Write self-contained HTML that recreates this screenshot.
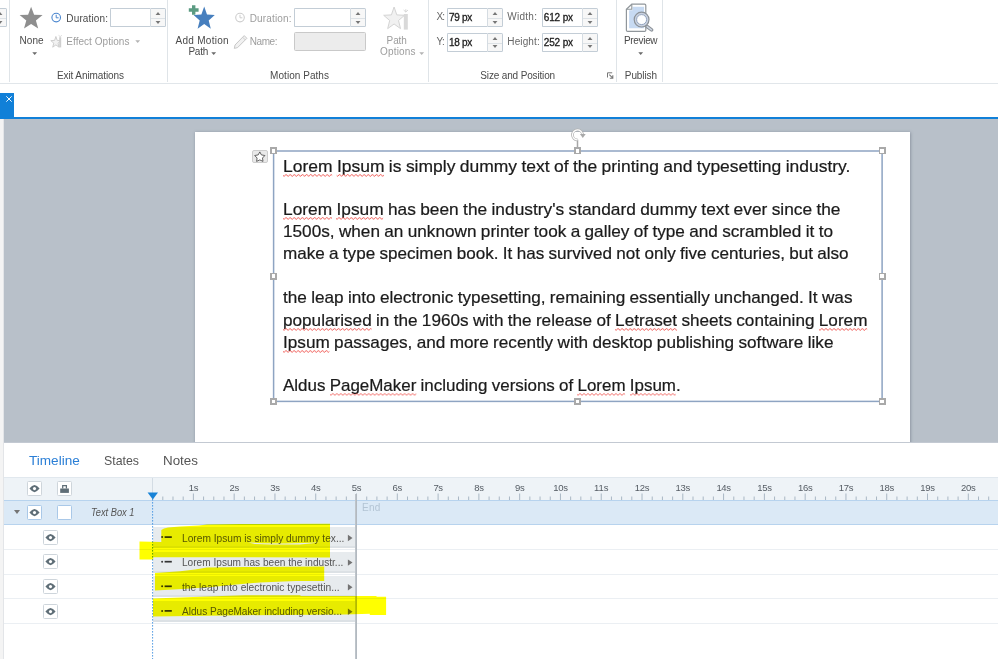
<!DOCTYPE html>
<html lang="en">
<head>
<meta charset="utf-8">
<title>Storyline - Timeline</title>
<style>
html,body{margin:0;padding:0;background:#fff;}
body{width:998px;height:659px;overflow:hidden;position:relative;font-family:"Liberation Sans",sans-serif;color:#444;}
.abs{position:absolute;}
.t{position:absolute;white-space:nowrap;line-height:1;}
/* ---------- ribbon ---------- */
#ribbon{position:absolute;left:0;top:0;width:998px;height:83px;background:#fff;border-bottom:1px solid #e1e6ea;}

.rt.dis{color:#9c9c9c;}
.vsep{position:absolute;width:1px;background:#dfe4e8;top:0;height:82px;}
.inp{position:absolute;box-sizing:border-box;border:1px solid #c3cdd6;border-right:none;background:#fff;height:20px;border-radius:1.5px 0 0 1.5px;}
.inp.gray{background:#ececec;border:1px solid #c9c9c9;border-radius:1.5px;}
.spin{position:absolute;box-sizing:border-box;border:1px solid #c3cdd6;border-left:1px solid #d5dce2;background:#f7f7f7;width:15px;height:20px;border-radius:0 1.5px 1.5px 0;}
.spin:before{content:"";position:absolute;left:0;right:0;top:8.4px;height:1px;background:#dde2e6;}
.spin i{position:absolute;left:4.2px;width:0;height:0;border-left:3px solid transparent;border-right:3px solid transparent;transform:scaleX(.82);}
.spin i.u{top:3px;border-bottom:3px solid #777;}
.spin i.d{top:11.2px;border-top:3px solid #777;}
.val{position:absolute;left:3px;top:3px;font-size:11px;line-height:13px;color:#222;white-space:nowrap;letter-spacing:.2px;}
.caret{position:absolute;width:0;height:0;border-left:2.9px solid transparent;border-right:2.9px solid transparent;border-top:2.9px solid #5c5c5c;}
.caret.dis{border-top-color:#aaa;}
/* ---------- doc tab strip ---------- */
#tabstrip{position:absolute;left:0;top:84px;width:998px;height:33px;background:#fff;}
#tabx{position:absolute;left:0;top:93px;width:14px;height:24px;background:#1180d8;}
#blueline{position:absolute;left:0;top:117px;width:998px;height:2px;background:#1180d8;}
/* ---------- workspace ---------- */
#work{position:absolute;left:0;top:119px;width:998px;height:323px;background:#b8c0c9;overflow:hidden;}
#leftstrip{position:absolute;left:0;top:119px;width:4.4px;height:540px;background:#f4f4f4;box-shadow:inset -1px 0 0 #e3e5e8;}
#slide{position:absolute;left:194.6px;top:13.4px;width:715.8px;height:320px;background:#fff;box-shadow:0 0 3px 0.5px rgba(110,120,135,.75);}
#workbottom{position:absolute;left:4px;top:442px;width:994px;height:1px;background:#c3c9d2;}
.hnd{position:absolute;width:7px;height:7px;background:#a9a9a9;}
.hnd:after{content:"";position:absolute;left:1.7px;top:1.7px;right:1.7px;bottom:1.7px;background:#fff;}
.sl{line-height:17px;}
.sq{position:relative;display:inline-block;}
.sqs{position:absolute;left:0;top:16px;overflow:hidden;}
/* ---------- timeline ---------- */
#tl{position:absolute;left:4px;top:443px;width:994px;height:216px;background:#fff;overflow:hidden;}
.ebox{position:absolute;width:15px;height:15px;box-sizing:border-box;border:1px solid #ced5db;border-radius:1.5px;background:#fff;}
.ebox.sel{border-color:#a9c8e8;}
.ebox svg{position:absolute;left:0;top:0;}
.bar{position:absolute;width:202px;height:21px;background:#e7ebee;border-bottom:2px solid #dce1e5;box-sizing:border-box;}
</style>
</head>
<body>

<!-- ================= RIBBON ================= -->
<div id="ribbon">
<div class="vsep" style="left:9px"></div>
<div class="vsep" style="left:167px"></div>
<div class="vsep" style="left:428px"></div>
<div class="vsep" style="left:616px"></div>
<div class="vsep" style="left:662px"></div>
<div class="spin" style="left:-8px;top:8.4px;height:18.6px;width:15px"><i class="u"></i><i class="d"></i></div>
<svg class="abs" style="left:0;top:0" width="998" height="83" viewBox="0 0 998 83"><polygon points="31.1,6.8 34.1,14.8 42.6,15.1 35.9,20.4 38.2,28.6 31.1,23.9 24.0,28.6 26.3,20.4 19.6,15.1 28.1,14.8" fill="#8e8e8e"/><circle cx="56.2" cy="17.6" r="4.3" fill="#fff" stroke="#4a86cf" stroke-width="1.1"/><path d="M56.2 14.8 V17.8 H58.6" stroke="#4a86cf" stroke-width="1" fill="none"/><polygon points="55.9,36.5 57.2,40.4 61.0,40.6 58.0,43.2 59.1,47.2 55.9,44.9 52.7,47.2 53.8,43.2 50.8,40.6 54.6,40.4" fill="#f2f2f2" stroke="#c9c9c9" stroke-width="0.9"/><path d="M60.2 37.2 V47.4" stroke="#cfcfcf" stroke-width="2"/><path d="M58.6 35.4 L60.2 36.6 L61.8 35.4" stroke="#cfcfcf" stroke-width=".8" fill="none"/><polygon points="204.2,6.5 207.0,14.6 214.8,15.0 208.7,20.4 210.8,28.8 204.2,24.0 197.6,28.8 199.7,20.4 193.6,15.0 201.4,14.6" fill="#477fbe"/><path d="M193.7 5.1 V15 M188.6 10 H198.8" stroke="#fff" stroke-width="5"/><path d="M193.7 5.3 V14.8 M188.8 10 H198.6" stroke="#5b9b82" stroke-width="3.4"/><circle cx="240" cy="17.6" r="4.3" fill="#fff" stroke="#cdcdcd" stroke-width="1.1"/><path d="M240 14.8 V17.8 H242.4" stroke="#cdcdcd" stroke-width="1" fill="none"/><path d="M244.2 35.6 L246.9 38.3 L237.6 47.6 L234.3 48.4 L235 45 Z" fill="#f1f1f1" stroke="#c8c8c8" stroke-width="1"/><path d="M242.6 37.2 L245.3 39.9" stroke="#c8c8c8" stroke-width=".9"/><polygon points="394.1,7.0 396.8,14.9 404.5,15.3 398.5,20.5 400.5,28.6 394.1,24.0 387.7,28.6 389.7,20.5 383.7,15.3 391.4,14.9" fill="#f1f1f1" stroke="#d4d4d4" stroke-width="1"/><rect x="403.8" y="14" width="4" height="15.6" fill="#d9d9d9"/><path d="M403.6 10 L405.8 12 L408 10 M405.8 9.2 V12" stroke="#d4d4d4" stroke-width=".9" fill="none"/><path d="M607.5 77.5 V72.8 H612.2" stroke="#777" stroke-width="1" fill="none"/><path d="M609.3 74.6 L612.6 77.9 M612.8 75.2 V78.2 H609.8" stroke="#777" stroke-width="1.1" fill="none"/><path d="M631.8 4.2 H644.6 Q645.8 4.2 645.8 5.4 V30.2 Q645.8 31.4 644.6 31.4 H627.6 Q626.4 31.4 626.4 30.2 V9.2 Z" fill="#fff" stroke="#90969b" stroke-width="1.2"/><path d="M632.6 6.8 H644.1 V28.3 H629.1 V10.2 H632.6 Z" fill="#c7daf2"/><path d="M626.6 9.2 H631.8 V4.4" fill="none" stroke="#90969b" stroke-width="1.1"/><path d="M647 26.5 L651.6 29.9" stroke="#8c9298" stroke-width="3.6" stroke-linecap="round"/><path d="M647.2 26.6 L651.5 29.8" stroke="#cdd5e2" stroke-width="1.5" stroke-linecap="round"/><circle cx="641.6" cy="19.6" r="7.4" fill="#c9d2e1" stroke="#8c9298" stroke-width="1.2"/><circle cx="641.6" cy="19.6" r="5" fill="#fdfeff" stroke="#8a9cb8" stroke-width="0.9"/></svg>
<div class="t" style="left:19.6px;top:36.2px;font-size:10px;line-height:10px;color:#4a4a4a;">None</div>
<svg class="abs" style="left:31.7px;top:51.7px" width="6" height="4" viewBox="0 0 6 4"><polygon points="0.3,0.3 5.1,0.3 2.7,3.1" fill="#6a6a6a"/></svg>
<div class="t" style="left:66.3px;top:13.6px;font-size:10px;line-height:10px;color:#4a4a4a;letter-spacing:0.15px;">Duration:</div>
<div class="inp" style="left:110px;top:8.4px;width:40px;height:18.6px"></div><div class="spin" style="left:150px;top:8.4px;height:18.6px;width:16px"><i class="u"></i><i class="d"></i></div>
<div class="t" style="left:66.3px;top:37.2px;font-size:10px;line-height:10px;color:#9d9d9d;letter-spacing:0.04px;">Effect Options</div>
<svg class="abs" style="left:134.9px;top:40.2px" width="6" height="4" viewBox="0 0 6 4"><polygon points="0.3,0.3 5.1,0.3 2.7,3.1" fill="#b4b4b4"/></svg>
<div class="t" style="left:56.9px;top:70.7px;font-size:10px;line-height:10px;color:#4a4a4a;letter-spacing:-0.09px;">Exit Animations</div>
<div class="t" style="left:175.6px;top:36.2px;font-size:10px;line-height:10px;color:#4a4a4a;letter-spacing:0.27px;">Add Motion</div>
<div class="t" style="left:188.4px;top:46.8px;font-size:10px;line-height:10px;color:#4a4a4a;letter-spacing:-0.22px;">Path</div>
<svg class="abs" style="left:211.2px;top:51.6px" width="6" height="4" viewBox="0 0 6 4"><polygon points="0.3,0.3 5.1,0.3 2.7,3.1" fill="#6a6a6a"/></svg>
<div class="t" style="left:249.7px;top:13.6px;font-size:10px;line-height:10px;color:#9d9d9d;letter-spacing:0.15px;">Duration:</div>
<div class="inp" style="left:294px;top:8.4px;width:56px;height:18.6px"></div><div class="spin" style="left:350px;top:8.4px;height:18.6px;width:16px"><i class="u"></i><i class="d"></i></div>
<div class="t" style="left:249.7px;top:37.2px;font-size:10px;line-height:10px;color:#9d9d9d;letter-spacing:-0.41px;">Name:</div>
<div class="inp gray" style="left:294px;top:32px;width:72px;height:19.4px"></div>
<div class="t" style="left:270.1px;top:70.7px;font-size:10px;line-height:10px;color:#4a4a4a;letter-spacing:0.04px;">Motion Paths</div>
<div class="t" style="left:386.6px;top:36.2px;font-size:10px;line-height:10px;color:#9d9d9d;letter-spacing:-0.12px;">Path</div>
<div class="t" style="left:380.1px;top:46.8px;font-size:10px;line-height:10px;color:#9d9d9d;letter-spacing:0.16px;">Options</div>
<svg class="abs" style="left:418.5px;top:51.6px" width="6" height="4" viewBox="0 0 6 4"><polygon points="0.3,0.3 5.1,0.3 2.7,3.1" fill="#b4b4b4"/></svg>
<div class="t" style="left:436.5px;top:12.2px;font-size:10px;line-height:10px;color:#666;letter-spacing:-0.83px;">X:</div>
<div class="inp" style="left:447px;top:8.4px;width:40px;height:18.6px"></div><div class="spin" style="left:487px;top:8.4px;height:18.6px;width:16px"><i class="u"></i><i class="d"></i></div>
<div class="t" style="left:449.1px;top:12.5px;font-size:10px;line-height:10px;color:#1c1c1c;letter-spacing:-0.33px;-webkit-text-stroke:0.3px #1c1c1c;">79 px</div>
<div class="t" style="left:436.5px;top:37.2px;font-size:10px;line-height:10px;color:#666;letter-spacing:-0.55px;">Y:</div>
<div class="inp" style="left:447px;top:33.2px;width:40px;height:18.4px"></div><div class="spin" style="left:487px;top:33.2px;height:18.4px;width:16px"><i class="u"></i><i class="d"></i></div>
<div class="t" style="left:449.1px;top:37.7px;font-size:10px;line-height:10px;color:#1c1c1c;letter-spacing:-0.33px;-webkit-text-stroke:0.3px #1c1c1c;">18 px</div>
<div class="t" style="left:507.3px;top:12.2px;font-size:10px;line-height:10px;color:#666;letter-spacing:0.26px;">Width:</div>
<div class="inp" style="left:542px;top:8.4px;width:40px;height:18.6px"></div><div class="spin" style="left:582px;top:8.4px;height:18.6px;width:16px"><i class="u"></i><i class="d"></i></div>
<div class="t" style="left:543.7px;top:12.5px;font-size:10px;line-height:10px;color:#1c1c1c;letter-spacing:-0.12px;-webkit-text-stroke:0.3px #1c1c1c;">612 px</div>
<div class="t" style="left:507.3px;top:37.2px;font-size:10px;line-height:10px;color:#666;letter-spacing:0.12px;">Height:</div>
<div class="inp" style="left:542px;top:33.2px;width:40px;height:18.4px"></div><div class="spin" style="left:582px;top:33.2px;height:18.4px;width:16px"><i class="u"></i><i class="d"></i></div>
<div class="t" style="left:543.7px;top:37.7px;font-size:10px;line-height:10px;color:#1c1c1c;letter-spacing:-0.12px;-webkit-text-stroke:0.3px #1c1c1c;">252 px</div>
<div class="t" style="left:480.3px;top:70.7px;font-size:10px;line-height:10px;color:#4a4a4a;letter-spacing:-0.15px;">Size and Position</div>
<div class="t" style="left:624.0px;top:36.2px;font-size:10px;line-height:10px;color:#4a4a4a;letter-spacing:-0.33px;">Preview</div>
<svg class="abs" style="left:637.7px;top:51.7px" width="6" height="4" viewBox="0 0 6 4"><polygon points="0.3,0.3 5.1,0.3 2.7,3.1" fill="#6a6a6a"/></svg>
<div class="t" style="left:624.8px;top:70.7px;font-size:10px;line-height:10px;color:#4a4a4a;letter-spacing:-0.09px;">Publish</div>
</div>

<!-- ================= TAB STRIP ================= -->
<div id="tabstrip"></div>
<div id="tabx">
  <svg class="abs" style="left:4.6px;top:2.2px" width="8" height="8" viewBox="0 0 8 8"><path d="M1.3 1.3 L6.7 6.7 M6.7 1.3 L1.3 6.7" stroke="#fff" stroke-width="0.95" fill="none"/></svg>
</div>
<div id="blueline"></div>

<!-- ================= WORKSPACE ================= -->
<div id="work">
  <div id="slide"></div>
<svg class="abs" width="0" height="0" style="left:0;top:0"><defs><pattern id="sqp" width="4" height="3" patternUnits="userSpaceOnUse"><path d="M-1 0.4 L1 2.4 L3 0.4 L5 2.4" stroke="#ee4540" stroke-width="0.8" fill="none"/></pattern></defs></svg>
<div class="abs" style="left:252.4px;top:31.2px;width:15.4px;height:13.2px;background:#e9e9e9;border:1px solid #cdcdcd;border-radius:2px;box-sizing:border-box;"></div>
<svg class="abs" style="left:252.4px;top:31.2px" width="16" height="14" viewBox="0 0 16 14"><polygon points="7.8,1.9 9.4,4.9 12.9,5.5 10.5,8.0 11.0,11.4 7.8,9.9 4.6,11.4 5.1,8.0 2.7,5.5 6.2,4.9" fill="#fff" stroke="#4a4a4a" stroke-width="0.85"/></svg>
<svg class="abs" style="left:0;top:0" width="998" height="323" viewBox="0 0 998 323"><rect x="273.6" y="32.0" width="608.5" height="250.4" fill="none" stroke="#8ea4c2" stroke-width="1.5"/></svg>
<svg class="abs" style="left:568px;top:8px" width="20" height="24" viewBox="0 0 20 24"><path d="M9.5 12.6 V20.5" stroke="#a6a6a6" stroke-width="1.5"/><path d="M9.5 12.9 A5 5 0 1 1 14.5 7.9" stroke="#b1b1b1" stroke-width="2.7" fill="none"/><path d="M9.5 12.9 A5 5 0 1 1 14.5 7.6" stroke="#fff" stroke-width="1.2" fill="none"/><path d="M11.9 7 H17.7 L14.8 10.9 Z" fill="#a9a9a9"/></svg>
<div class="hnd" style="left:270.0px;top:28.3px"></div>
<div class="hnd" style="left:270.0px;top:278.9px"></div>
<div class="hnd" style="left:574.1px;top:28.3px"></div>
<div class="hnd" style="left:574.1px;top:278.9px"></div>
<div class="hnd" style="left:878.5px;top:28.3px"></div>
<div class="hnd" style="left:878.5px;top:278.9px"></div>
<div class="hnd" style="left:270.0px;top:153.5px"></div>
<div class="hnd" style="left:878.5px;top:153.5px"></div>
<div class="t sl" style="left:283.1px;top:39.1px;font-size:17px;line-height:17px;color:#1b1b1b;transform:scaleX(1.0275);transform-origin:0 0;word-spacing:-0.45px;-webkit-text-stroke:0.22px #1b1b1b;"><span class="sq">Lorem<svg class="sqs" width="100%" height="3"><rect width="100%" height="3" fill="url(#sqp)"/></svg></span> <span class="sq">Ipsum<svg class="sqs" width="100%" height="3"><rect width="100%" height="3" fill="url(#sqp)"/></svg></span> is simply dummy text of the printing and typesetting industry.</div>
<div class="t sl" style="left:283.1px;top:82.2px;font-size:17px;line-height:17px;color:#1b1b1b;transform:scaleX(1.0186);transform-origin:0 0;word-spacing:-0.45px;-webkit-text-stroke:0.22px #1b1b1b;"><span class="sq">Lorem<svg class="sqs" width="100%" height="3"><rect width="100%" height="3" fill="url(#sqp)"/></svg></span> <span class="sq">Ipsum<svg class="sqs" width="100%" height="3"><rect width="100%" height="3" fill="url(#sqp)"/></svg></span> has been the industry's standard dummy text ever since the</div>
<div class="t sl" style="left:283.1px;top:104.3px;font-size:17px;line-height:17px;color:#1b1b1b;transform:scaleX(1.0107);transform-origin:0 0;word-spacing:-0.45px;-webkit-text-stroke:0.22px #1b1b1b;">1500s, when an unknown printer took a galley of type and scrambled it to</div>
<div class="t sl" style="left:283.1px;top:126.4px;font-size:17px;line-height:17px;color:#1b1b1b;transform:scaleX(1.0046);transform-origin:0 0;word-spacing:-0.45px;-webkit-text-stroke:0.22px #1b1b1b;">make a type specimen book. It has survived not only five centuries, but also</div>
<div class="t sl" style="left:283.1px;top:170.3px;font-size:17px;line-height:17px;color:#1b1b1b;transform:scaleX(1.0099);transform-origin:0 0;word-spacing:-0.45px;-webkit-text-stroke:0.22px #1b1b1b;">the leap into electronic typesetting, remaining essentially unchanged. It was</div>
<div class="t sl" style="left:283.1px;top:192.5px;font-size:17px;line-height:17px;color:#1b1b1b;transform:scaleX(1.0092);transform-origin:0 0;word-spacing:-0.45px;-webkit-text-stroke:0.22px #1b1b1b;"><span class="sq">popularised<svg class="sqs" width="100%" height="3"><rect width="100%" height="3" fill="url(#sqp)"/></svg></span> in the 1960s with the release of <span class="sq">Letraset<svg class="sqs" width="100%" height="3"><rect width="100%" height="3" fill="url(#sqp)"/></svg></span> sheets containing <span class="sq">Lorem<svg class="sqs" width="100%" height="3"><rect width="100%" height="3" fill="url(#sqp)"/></svg></span></div>
<div class="t sl" style="left:283.1px;top:214.6px;font-size:17px;line-height:17px;color:#1b1b1b;transform:scaleX(1.0101);transform-origin:0 0;word-spacing:-0.45px;-webkit-text-stroke:0.22px #1b1b1b;"><span class="sq">Ipsum<svg class="sqs" width="100%" height="3"><rect width="100%" height="3" fill="url(#sqp)"/></svg></span> passages, and more recently with desktop publishing software like</div>
<div class="t sl" style="left:283.1px;top:257.7px;font-size:17px;line-height:17px;color:#1b1b1b;transform:scaleX(0.9968);transform-origin:0 0;word-spacing:-0.45px;-webkit-text-stroke:0.22px #1b1b1b;">Aldus <span class="sq">PageMaker<svg class="sqs" width="100%" height="3"><rect width="100%" height="3" fill="url(#sqp)"/></svg></span> including versions of <span class="sq">Lorem<svg class="sqs" width="100%" height="3"><rect width="100%" height="3" fill="url(#sqp)"/></svg></span> <span class="sq">Ipsum<svg class="sqs" width="100%" height="3"><rect width="100%" height="3" fill="url(#sqp)"/></svg></span>.</div>
</div>
<div id="workbottom"></div>

<!-- ================= TIMELINE ================= -->
<div id="tl">
<div class="t" style="left:24.6px;top:11.0px;font-size:13px;line-height:13px;color:#2b7fd6;transform:scaleX(1.0441);transform-origin:0 0;">Timeline</div>
<div class="t" style="left:99.5px;top:11.0px;font-size:13px;line-height:13px;color:#555;transform:scaleX(0.9496);transform-origin:0 0;">States</div>
<div class="t" style="left:159.0px;top:11.0px;font-size:13px;line-height:13px;color:#555;transform:scaleX(1.0304);transform-origin:0 0;">Notes</div>
<div class="abs" style="left:0;top:34px;width:994px;height:23px;background:#eef3f7;border-top:1px solid #e1e8ee;box-sizing:border-box;"></div>
<div class="abs" style="left:148px;top:35px;width:1px;height:22px;background:#d3dce4;"></div>
<div class="ebox" style="left:23px;top:38px"><svg width="13" height="13" viewBox="0 0 13 13"><path d="M1.4 6.6 Q4 3.4 6.5 3 Q9 3.4 11.6 6.6 Q9 9.8 6.5 10.2 Q4 9.8 1.4 6.6 Z" fill="#5f6e77"/><circle cx="6.5" cy="6.6" r="1.55" fill="#fff"/></svg></div>
<div class="ebox" style="left:53px;top:38px"><svg width="13" height="13" viewBox="0 0 13 13"><rect x="2.2" y="6.5" width="8.7" height="4.4" fill="#5f6e77"/><path d="M4.7 6.6 V3.6 H8.4 V6.6" stroke="#5f6e77" stroke-width="1.25" fill="none"/></svg></div>
<svg class="abs" style="left:0;top:0" width="994" height="216" viewBox="0 0 994 216"><path d="M158.80 53.5 V57 M168.99 53.5 V57 M179.19 53.5 V57 M189.38 50.5 V57 M199.58 53.5 V57 M209.78 53.5 V57 M219.97 53.5 V57 M230.17 50.5 V57 M240.37 53.5 V57 M250.56 53.5 V57 M260.76 53.5 V57 M270.95 50.5 V57 M281.15 53.5 V57 M291.35 53.5 V57 M301.54 53.5 V57 M311.74 50.5 V57 M321.94 53.5 V57 M332.13 53.5 V57 M342.33 53.5 V57 M352.52 50.5 V57 M362.72 53.5 V57 M372.92 53.5 V57 M383.11 53.5 V57 M393.31 50.5 V57 M403.51 53.5 V57 M413.70 53.5 V57 M423.90 53.5 V57 M434.10 50.5 V57 M444.29 53.5 V57 M454.49 53.5 V57 M464.68 53.5 V57 M474.88 50.5 V57 M485.08 53.5 V57 M495.27 53.5 V57 M505.47 53.5 V57 M515.66 50.5 V57 M525.86 53.5 V57 M536.06 53.5 V57 M546.25 53.5 V57 M556.45 50.5 V57 M566.65 53.5 V57 M576.84 53.5 V57 M587.04 53.5 V57 M597.24 50.5 V57 M607.43 53.5 V57 M617.63 53.5 V57 M627.82 53.5 V57 M638.02 50.5 V57 M648.22 53.5 V57 M658.41 53.5 V57 M668.61 53.5 V57 M678.80 50.5 V57 M689.00 53.5 V57 M699.20 53.5 V57 M709.39 53.5 V57 M719.59 50.5 V57 M729.79 53.5 V57 M739.98 53.5 V57 M750.18 53.5 V57 M760.38 50.5 V57 M770.57 53.5 V57 M780.77 53.5 V57 M790.96 53.5 V57 M801.16 50.5 V57 M811.36 53.5 V57 M821.55 53.5 V57 M831.75 53.5 V57 M841.94 50.5 V57 M852.14 53.5 V57 M862.34 53.5 V57 M872.53 53.5 V57 M882.73 50.5 V57 M892.93 53.5 V57 M903.12 53.5 V57 M913.32 53.5 V57 M923.51 50.5 V57 M933.71 53.5 V57 M943.91 53.5 V57 M954.10 53.5 V57 M964.30 50.5 V57 M974.50 53.5 V57 M984.69 53.5 V57" stroke="#a9b7c4" stroke-width="1" fill="none"/></svg>
<div class="t" style="left:184.7px;top:39.7px;font-size:9.5px;line-height:9.5px;color:#555c64;letter-spacing:-0.32px;">1s</div>
<div class="t" style="left:225.5px;top:39.7px;font-size:9.5px;line-height:9.5px;color:#555c64;letter-spacing:-0.32px;">2s</div>
<div class="t" style="left:266.3px;top:39.7px;font-size:9.5px;line-height:9.5px;color:#555c64;letter-spacing:-0.32px;">3s</div>
<div class="t" style="left:307.0px;top:39.7px;font-size:9.5px;line-height:9.5px;color:#555c64;letter-spacing:-0.32px;">4s</div>
<div class="t" style="left:347.8px;top:39.7px;font-size:9.5px;line-height:9.5px;color:#555c64;letter-spacing:-0.32px;">5s</div>
<div class="t" style="left:388.6px;top:39.7px;font-size:9.5px;line-height:9.5px;color:#555c64;letter-spacing:-0.32px;">6s</div>
<div class="t" style="left:429.4px;top:39.7px;font-size:9.5px;line-height:9.5px;color:#555c64;letter-spacing:-0.32px;">7s</div>
<div class="t" style="left:470.2px;top:39.7px;font-size:9.5px;line-height:9.5px;color:#555c64;letter-spacing:-0.32px;">8s</div>
<div class="t" style="left:511.0px;top:39.7px;font-size:9.5px;line-height:9.5px;color:#555c64;letter-spacing:-0.32px;">9s</div>
<div class="t" style="left:549.2px;top:39.7px;font-size:9.5px;line-height:9.5px;color:#555c64;letter-spacing:-0.31px;">10s</div>
<div class="t" style="left:590.0px;top:39.7px;font-size:9.5px;line-height:9.5px;color:#555c64;letter-spacing:-0.07px;">11s</div>
<div class="t" style="left:630.8px;top:39.7px;font-size:9.5px;line-height:9.5px;color:#555c64;letter-spacing:-0.31px;">12s</div>
<div class="t" style="left:671.6px;top:39.7px;font-size:9.5px;line-height:9.5px;color:#555c64;letter-spacing:-0.31px;">13s</div>
<div class="t" style="left:712.4px;top:39.7px;font-size:9.5px;line-height:9.5px;color:#555c64;letter-spacing:-0.31px;">14s</div>
<div class="t" style="left:753.2px;top:39.7px;font-size:9.5px;line-height:9.5px;color:#555c64;letter-spacing:-0.31px;">15s</div>
<div class="t" style="left:794.0px;top:39.7px;font-size:9.5px;line-height:9.5px;color:#555c64;letter-spacing:-0.31px;">16s</div>
<div class="t" style="left:834.7px;top:39.7px;font-size:9.5px;line-height:9.5px;color:#555c64;letter-spacing:-0.31px;">17s</div>
<div class="t" style="left:875.5px;top:39.7px;font-size:9.5px;line-height:9.5px;color:#555c64;letter-spacing:-0.31px;">18s</div>
<div class="t" style="left:916.3px;top:39.7px;font-size:9.5px;line-height:9.5px;color:#555c64;letter-spacing:-0.31px;">19s</div>
<div class="t" style="left:957.1px;top:39.7px;font-size:9.5px;line-height:9.5px;color:#555c64;letter-spacing:-0.31px;">20s</div>
<div class="abs" style="left:0;top:57px;width:994px;height:25.4px;background:#dbe9f6;border-top:1px solid #b7d3ee;border-bottom:1px solid #b7d3ee;box-sizing:border-box;"></div>
<div class="abs" style="left:10px;top:67px;width:0;height:0;border-left:3.4px solid transparent;border-right:3.4px solid transparent;border-top:4.2px solid #747474;"></div>
<div class="ebox sel" style="left:23px;top:62px"><svg width="13" height="13" viewBox="0 0 13 13"><path d="M1.4 6.6 Q4 3.4 6.5 3 Q9 3.4 11.6 6.6 Q9 9.8 6.5 10.2 Q4 9.8 1.4 6.6 Z" fill="#5f6e77"/><circle cx="6.5" cy="6.6" r="1.55" fill="#fff"/></svg></div>
<div class="ebox sel" style="left:53px;top:62px"></div>
<div class="t" style="left:87.0px;top:64.0px;font-size:11.5px;line-height:11.5px;color:#555;transform:scaleX(0.8067);transform-origin:0 0;font:italic 11.5px/11.5px 'Liberation Sans',sans-serif;">Text Box 1</div>
<div class="t" style="left:358.0px;top:59.8px;font-size:10px;line-height:10px;color:#b3c4d4;letter-spacing:0.23px;">End</div>
<div class="abs" style="left:0;top:106.1px;width:994px;height:1px;background:#ebeff3;"></div>
<div class="ebox" style="left:39px;top:87px"><svg width="13" height="13" viewBox="0 0 13 13"><path d="M1.4 6.6 Q4 3.4 6.5 3 Q9 3.4 11.6 6.6 Q9 9.8 6.5 10.2 Q4 9.8 1.4 6.6 Z" fill="#5f6e77"/><circle cx="6.5" cy="6.6" r="1.55" fill="#fff"/></svg></div>
<div class="bar" style="left:149px;top:84.0px;"></div>
<div class="abs" style="left:0;top:130.7px;width:994px;height:1px;background:#ebeff3;"></div>
<div class="ebox" style="left:39px;top:111px"><svg width="13" height="13" viewBox="0 0 13 13"><path d="M1.4 6.6 Q4 3.4 6.5 3 Q9 3.4 11.6 6.6 Q9 9.8 6.5 10.2 Q4 9.8 1.4 6.6 Z" fill="#5f6e77"/><circle cx="6.5" cy="6.6" r="1.55" fill="#fff"/></svg></div>
<div class="bar" style="left:149px;top:108.6px;"></div>
<div class="abs" style="left:0;top:155.3px;width:994px;height:1px;background:#ebeff3;"></div>
<div class="ebox" style="left:39px;top:136px"><svg width="13" height="13" viewBox="0 0 13 13"><path d="M1.4 6.6 Q4 3.4 6.5 3 Q9 3.4 11.6 6.6 Q9 9.8 6.5 10.2 Q4 9.8 1.4 6.6 Z" fill="#5f6e77"/><circle cx="6.5" cy="6.6" r="1.55" fill="#fff"/></svg></div>
<div class="bar" style="left:149px;top:133.2px;"></div>
<div class="abs" style="left:0;top:179.9px;width:994px;height:1px;background:#ebeff3;"></div>
<div class="ebox" style="left:39px;top:161px"><svg width="13" height="13" viewBox="0 0 13 13"><path d="M1.4 6.6 Q4 3.4 6.5 3 Q9 3.4 11.6 6.6 Q9 9.8 6.5 10.2 Q4 9.8 1.4 6.6 Z" fill="#5f6e77"/><circle cx="6.5" cy="6.6" r="1.55" fill="#fff"/></svg></div>
<div class="bar" style="left:149px;top:157.8px;"></div>
<div class="t" style="left:178.4px;top:89.5px;font-size:11px;line-height:11px;color:#555;transform:scaleX(0.9257);transform-origin:0 0;">Lorem Ipsum is simply dummy tex...</div>
<div class="t" style="left:178.4px;top:114.1px;font-size:11px;line-height:11px;color:#555;transform:scaleX(0.9191);transform-origin:0 0;">Lorem Ipsum has been the industr...</div>
<div class="t" style="left:178.4px;top:138.7px;font-size:11px;line-height:11px;color:#555;transform:scaleX(0.9310);transform-origin:0 0;">the leap into electronic typesettin...</div>
<div class="t" style="left:178.4px;top:163.3px;font-size:11px;line-height:11px;color:#555;transform:scaleX(0.9149);transform-origin:0 0;">Aldus PageMaker including versio...</div>
<svg class="abs" style="left:0;top:0" width="994" height="216" viewBox="0 0 994 216"><circle cx="158.1" cy="94.1" r="1" fill="#3a3a3a"/><rect x="160.6" y="93.25" width="7.2" height="1.7" fill="#333"/><polygon points="343.9,91.8 348.5,95.0 343.9,98.2" fill="#737373"/><circle cx="158.1" cy="118.7" r="1" fill="#3a3a3a"/><rect x="160.6" y="117.85" width="7.2" height="1.7" fill="#333"/><polygon points="343.9,116.4 348.5,119.6 343.9,122.8" fill="#737373"/><circle cx="158.1" cy="143.3" r="1" fill="#3a3a3a"/><rect x="160.6" y="142.45" width="7.2" height="1.7" fill="#333"/><polygon points="343.9,141.0 348.5,144.2 343.9,147.4" fill="#737373"/><circle cx="158.1" cy="167.9" r="1" fill="#3a3a3a"/><rect x="160.6" y="167.05" width="7.2" height="1.7" fill="#333"/><polygon points="343.9,165.6 348.5,168.8 343.9,172.0" fill="#737373"/></svg>
<div class="abs" style="left:351px;top:51px;width:2px;height:165px;background:linear-gradient(90deg,#c3c9cf,#adb4bb);"></div>
<svg class="abs" style="left:0;top:0" width="994" height="216" viewBox="0 0 994 216"><path d="M148.6 56 V217" stroke="#4493e0" stroke-width="0.9" stroke-dasharray="1.6 1.4" fill="none"/><polygon points="143.6,49.39999999999998 154,49.39999999999998 148.8,56.60000000000002" fill="#1883d7"/></svg>
<svg class="abs" style="left:0;top:0;mix-blend-mode:multiply" width="994" height="216" viewBox="0 0 994 216"><path d="M157.3 87.0 L160.0 85.6 L164.0 84.5 L176.0 83.6 L195.0 82.5 L203.0 81.6 L236.0 81.1 L326.0 80.7 L326.0 114.6 L246.0 114.2 L149.2 114.2 L149.2 116.6 L135.5 116.6 L135.5 98.5 L157.3 99.0 Z M244.0 99.4 L258.0 100.2 L281.0 100.6 L316.0 99.6 L296.0 101.6 L266.0 101.6 L251.0 101.0 Z" fill="#ffff00" fill-rule="evenodd"/><path d="M151.0 130.0 L176.0 128.2 L191.0 126.5 L203.0 124.5 L241.0 124.0 L320.2 123.6 L320.2 138.0 L292.0 138.0 L256.0 139.5 L230.0 141.7 L208.0 144.0 L179.0 146.0 L151.0 147.4 Z" fill="#ffff00"/><path d="M149.0 155.6 L196.0 153.8 L241.0 152.2 L296.0 152.3 L297.0 153.0 L372.5 152.9 L372.5 153.8 L382.1 153.8 L382.1 171.9 L365.8 171.9 L365.8 170.8 L341.0 171.4 L241.0 172.2 L149.0 173.6 Z" fill="#ffff00"/></svg>
</div>
<div id="leftstrip"></div>

</body>
</html>
